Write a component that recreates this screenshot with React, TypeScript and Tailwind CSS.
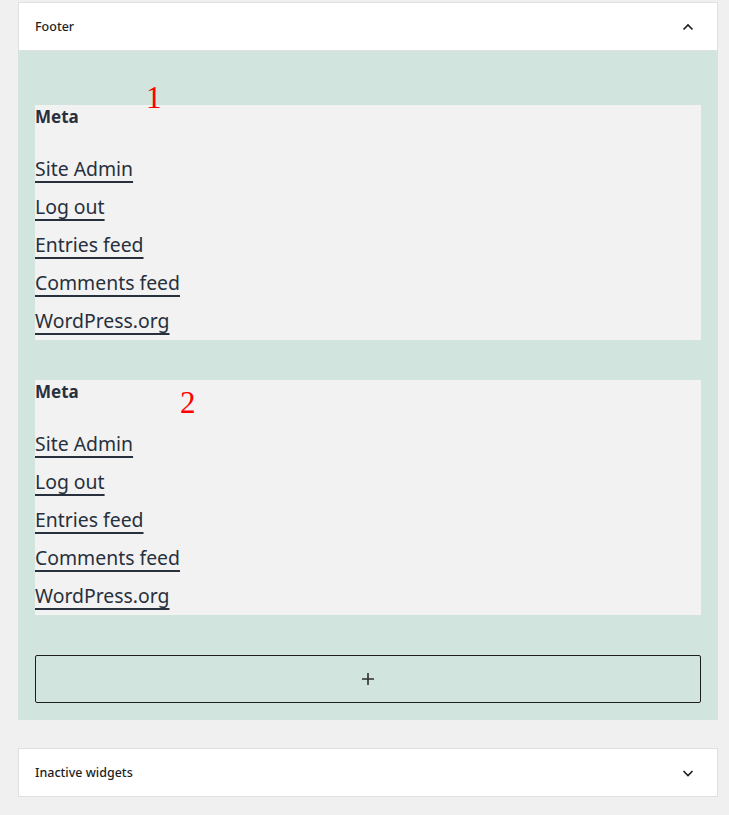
const links = ["Site Admin", "Log out", "Entries feed", "Comments feed", "WordPress.org"];

function MetaWidget({ mark, markClass }: { mark: string; markClass: string }) {
  return (
    <div className="relative bg-[#f2f2f2] text-[#28303d]">
      <h2 className="text-[17px] font-bold leading-[24px]">Meta</h2>
      <ul className="mt-[21px]">
        {links.map((l) => (
          <li key={l} className="h-[38px] text-[19.4px] leading-[38px]">
            <a className="underline decoration-2 underline-offset-[5px] decoration-[#28303d]">{l}</a>
          </li>
        ))}
      </ul>
      <span
        className={`absolute text-[31px] leading-none text-[#ff0000] ${markClass}`}
        style={{ fontFamily: '"Liberation Serif", serif' }}
      >
        {mark}
      </span>
    </div>
  );
}

function Chevron({ up }: { up?: boolean }) {
  return (
    <svg width="24" height="24" viewBox="0 0 24 24" className="text-[#1e1e1e]">
      <path
        d={up ? "M7.5 14.5 12 10l4.5 4.5" : "M7.5 10 12 14.5 16.5 10"}
        fill="none"
        stroke="currentColor"
        strokeWidth="1.6"
      />
    </svg>
  );
}

export default function App() {
  return (
    <div
      className="min-h-screen bg-[#f0f0f0] pl-[18px] pt-[2px] pb-[18px]"
      style={{ fontFamily: '"Noto Sans", sans-serif' }}
    >
      <div className="w-[700px]">
        <div className="flex h-[49px] items-center justify-between border border-[#e0e0e0] bg-white pl-[16px] pr-[17px]">
          <span className="pt-[1px] text-[12.5px] font-medium text-[#1e1e1e]">Footer</span>
          <Chevron up />
        </div>
        <div className="flex flex-col bg-[#d2e4de] px-[17px] pt-[54px] pb-[17px]">
          <MetaWidget mark="1" markClass="left-[111px] -top-[23px]" />
          <div className="h-[40px]" />
          <MetaWidget mark="2" markClass="left-[145px] top-[7px]" />
          <button className="mt-[40px] flex h-[48px] items-center justify-center rounded-[2px] border border-[#1e1e1e]">
            <svg width="24" height="24" viewBox="0 0 24 24">
              <path d="M12 6v12M6 12h12" stroke="#2f2f2f" strokeWidth="1.6" />
            </svg>
          </button>
        </div>
        <div className="mt-[28px] flex h-[49px] items-center justify-between border border-[#e0e0e0] bg-white pl-[16px] pr-[17px]">
          <span className="pt-[1px] text-[12.5px] font-medium text-[#1e1e1e]">Inactive widgets</span>
          <Chevron />
        </div>
      </div>
    </div>
  );
}
